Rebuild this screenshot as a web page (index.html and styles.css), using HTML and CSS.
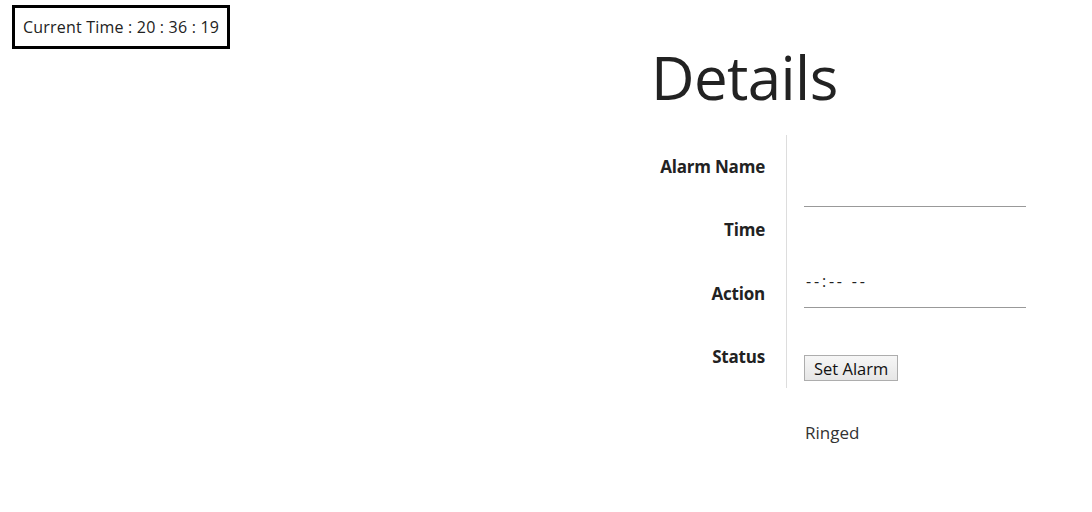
FILE: index.html
```html
<!DOCTYPE html>
<html lang="en">
<head>
    <meta charset="UTF-8">
    <meta name="viewport" content="width=device-width, initial-scale=1.0">
    <title>Alarm Clock</title>
    <link rel="stylesheet" href="styles.css">
</head>
<body>
    <div class="page">
        <!-- current time box -->
        <div class="clock" id="clock">Current Time : 20 : 36 : 19</div>

        <!-- alarm details -->
        <section class="details">
            <h1 class="details-title">Details</h1>
            <div class="form">
                <div class="labels">
                    <div class="label">Alarm Name</div>
                    <div class="label">Time</div>
                    <div class="label">Action</div>
                    <div class="label">Status</div>
                </div>
                <div class="fields">
                    <input type="text" class="field field-name">
                    <input type="text" class="field field-time" placeholder="--:-- --">
                    <button class="set-button">Set Alarm</button>
                    <div class="status">Ringed</div>
                </div>
            </div>
        </section>
    </div>
</body>
</html>
```

FILE: styles.css
```css
/* base */
body {
    margin: 0;
    padding: 0;
    font-family: "Open Sans", "Noto Sans", sans-serif;
    color: #222;
    background: #fff;
}

.page {
    display: flex;
    align-items: flex-start;
}

/* current time box */
.clock {
    margin: 5px 0 0 12px;
    padding: 0 8px;
    height: 38px;
    line-height: 39px;
    border: 3px solid #000;
    font-size: 16px;
    letter-spacing: 0.2px;
}

/* details block, pinned to the right */
.details {
    margin-left: auto;
    margin-right: 66px;
}

.details-title {
    margin: 37px 0 0 -2px;
    font-size: 60px;
    font-weight: 400;
    line-height: 80px;
    height: 98px;
    letter-spacing: -0.6px;
}

.form {
    display: flex;
    align-items: flex-start;
}

.labels {
    width: 112px;
    padding-right: 21px;
    border-right: 1px solid #ddd;
}

.label {
    height: 63.3px;
    line-height: 63px;
    text-align: right;
    font-weight: 700;
    font-size: 17px;
    letter-spacing: -0.2px;
}

.fields {
    display: flex;
    flex-direction: column;
    align-items: flex-start;
    margin-left: 17px;
}

/* underline inputs */
.field {
    width: 222px;
    height: 34px;
    padding: 0 2px;
    box-sizing: border-box;
    border: none;
    border-bottom: 1px solid #999;
    font-family: inherit;
    font-size: 16px;
    color: #222;
    outline: none;
}

.field-name {
    margin-top: 38px;
}

.field-time {
    margin-top: 67px;
    padding-bottom: 20px;
    height: 34px;
}

.field-time::placeholder {
    color: #222;
    letter-spacing: 2.8px;
}

.set-button {
    margin-top: 47px;
    height: 26px;
    padding: 0 9px;
    border: 1px solid #adadad;
    border-radius: 0;
    background: linear-gradient(#f6f6f6, #e6e6e6);
    font-family: inherit;
    font-size: 16.5px;
    color: #111;
}

.status {
    margin-top: 40px;
    margin-left: 1px;
    font-size: 17px;
    color: #333;
}
```
